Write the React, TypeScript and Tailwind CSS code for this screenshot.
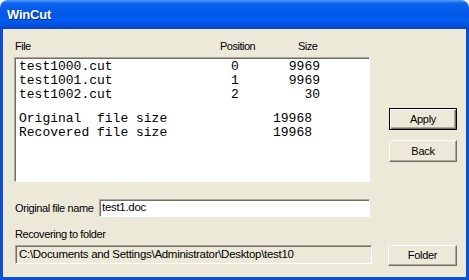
import * as React from 'react';

const files = [
    { name: 'test1000.cut', pos: '0', size: '9969' },
    { name: 'test1001.cut', pos: '1', size: '9969' },
    { name: 'test1002.cut', pos: '2', size: '30' },
];

const totals = [
    { label: 'Original  file size', value: '19968' },
    { label: 'Recovered file size', value: '19968' },
];

const sunken = 'border border-t-[#aca899] border-l-[#aca899] border-b-white border-r-white shadow-[inset_1px_1px_0_#716f64]';

const Button: React.FC<{ label: string; isDefault?: boolean; className?: string }> = ({ label, isDefault, className }) => (
    <button
        className={`flex items-center justify-center bg-[#ece9d8] text-[11px] tracking-[-0.3px] text-black ${
            isDefault
                ? 'border border-black shadow-[inset_1px_1px_0_#ffffff,inset_-1px_-1px_0_#716f64,inset_-2px_-2px_0_#aca899]'
                : 'border border-t-white border-l-white border-b-[#716f64] border-r-[#716f64] shadow-[inset_-1px_-1px_0_#aca899]'
        } ${className ?? ''}`}
    >
        {label}
    </button>
);

export default function App() {
    return (
        <div className="w-[469px] h-[280px] flex flex-col bg-white" style={{ fontFamily: '"Liberation Sans", Arial, sans-serif' }}>
            {/* Title bar */}
            <div className="h-[29px] shrink-0 rounded-t-[8px] flex items-center pl-[7px] bg-[linear-gradient(to_bottom,#4d98fa_0%,#0d63ee_12%,#0058e8_45%,#005cf2_70%,#064ddc_90%,#0a3fc4_100%)]">
                <span className="text-white font-bold text-[13px] tracking-[-0.2px] [text-shadow:1px_1px_0_#0a2a8c]">WinCut</span>
            </div>

            {/* Body */}
            <div className="flex-1 flex flex-col bg-[#ece9d8] border-x-[3px] border-b-[3px] border-[#0a4fd8] pl-[11px] text-[11px] tracking-[-0.4px] text-black">
                {/* column headers */}
                <div className="flex h-[13px] mt-[11px] leading-[13px] tracking-[-0.5px]">
                    <span className="pl-[1px] w-[206px]">File</span>
                    <span className="w-[78px]">Position</span>
                    <span>Size</span>
                </div>

                <div className="flex mt-[4px]">
                    {/* list box */}
                    <div className={`w-[356px] h-[125px] bg-white pt-[2px] pl-[4px] text-[13px] leading-[14px] tracking-normal ${sunken}`} style={{ fontFamily: '"Liberation Mono", "Courier New", monospace' }}>
                        {files.map((f) => (
                            <div key={f.name} className="flex">
                                <span className="w-[212px]">{f.name}</span>
                                <span className="w-[20px]">{f.pos}</span>
                                <span className="w-[69px] text-right">{f.size}</span>
                            </div>
                        ))}
                        <div className="h-[10px]" />
                        {totals.map((t) => (
                            <div key={t.label} className="flex whitespace-pre">
                                <span className="w-[254px]">{t.label}</span>
                                <span>{t.value}</span>
                            </div>
                        ))}
                    </div>

                    {/* buttons */}
                    <div className="flex flex-col ml-[19px] mt-[51px] gap-[10px]">
                        <Button label="Apply" isDefault className="w-[68px] h-[22px]" />
                        <Button label="Back" className="w-[68px] h-[22px]" />
                    </div>
                </div>

                {/* original file name */}
                <div className="flex items-center mt-[17px] h-[18px]">
                    <span className="w-[85px] pl-[1px]">Original file name</span>
                    <div className={`w-[271px] h-[18px] bg-white flex items-center pl-[2px] text-[11.5px] tracking-[-0.3px] ${sunken}`}>test1.doc</div>
                </div>

                <div className="mt-[11px] pl-[1px] leading-[13px]">Recovering to folder</div>

                {/* folder */}
                <div className="flex items-start mt-[4px]">
                    <div className={`w-[357px] h-[19px] ml-[1px] flex items-center pl-[3px] text-[11.5px] tracking-[-0.3px] ${sunken}`}>
                        C:\Documents and Settings\Administrator\Desktop\test10
                    </div>
                    <Button label="Folder" className="w-[69px] h-[21px] ml-[16px]" />
                </div>
            </div>
        </div>
    );
}
